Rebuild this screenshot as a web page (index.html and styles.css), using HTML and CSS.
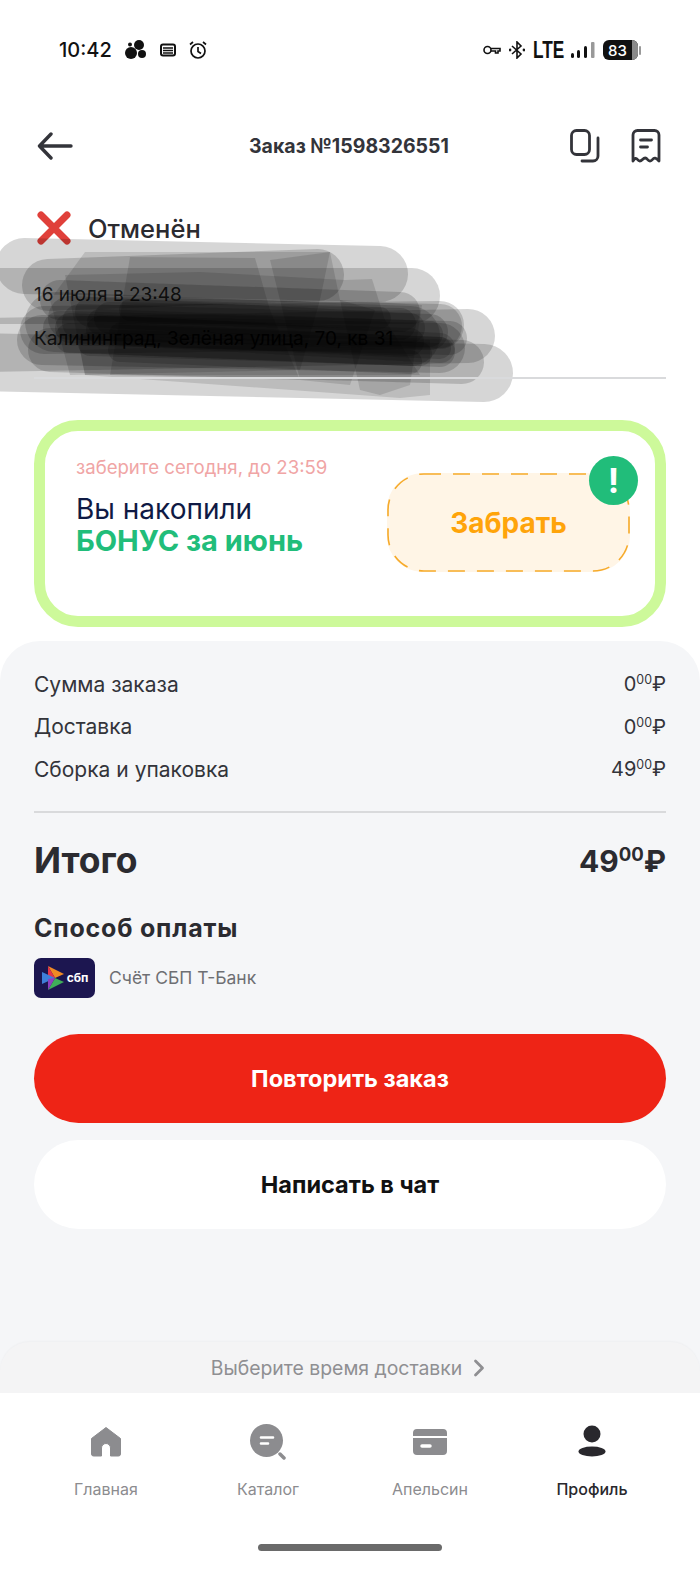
FILE: index.html
```html
<!DOCTYPE html>
<html lang="ru">
<head>
    <meta charset="UTF-8">
    <meta name="viewport" content="width=device-width, initial-scale=1.0">
    <title>Заказ №1598326551</title>
    <link rel="stylesheet" href="styles.css">
</head>
<body>
<div class="page">
    <!-- статус-бар -->
    <div class="statusbar">
        <div class="status-left">
            <span class="clock">10:42</span>
            <svg width="24" height="20" viewBox="0 0 24 20" fill="#111"><circle cx="15" cy="5" r="5"/><circle cx="7" cy="13" r="6"/><circle cx="18" cy="14" r="4"/><circle cx="6" cy="4.500" r="2"/></svg>
            <svg width="16" height="14" viewBox="0 0 16 14"><rect x="1" y="1.500" width="14" height="11" rx="2" fill="none" stroke="#111" stroke-width="2"/><path d="M3 5h10M3 7.500h10M3 10h10" stroke="#111" stroke-width="1.300"/></svg>
            <svg width="20" height="20" viewBox="0 0 20 20" fill="none" stroke="#111" stroke-width="1.700"><circle cx="10" cy="11" r="7"/><path d="M10 7v4.500l3 2M2 4.500 5 2M18 4.500 15 2"/></svg>
        </div>
        <div class="status-right">
            <svg width="18" height="10" viewBox="0 0 18 10" fill="none" stroke="#111" stroke-width="1.600"><circle cx="4.500" cy="5" r="3.500"/><path d="M8 3.500h9v2.500h-2v2h-2.500v-2H8"/></svg>
            <svg width="16" height="18" viewBox="0 0 16 18" fill="none" stroke="#111" stroke-width="1.600"><path d="M3 5l9 8-4 4V1l4 4-9 8"/><circle cx="1" cy="9" r=".6"/><circle cx="15" cy="9" r=".6"/></svg>
            <span class="lte">LTE</span>
            <svg width="24" height="18" viewBox="0 0 24 18"><rect x="0" y="12" width="3" height="5" rx="1.500" fill="#111"/><rect x="6" y="9" width="3" height="8" rx="1.500" fill="#111"/><rect x="13" y="5" width="3" height="12" rx="1.500" fill="#111"/><rect x="20" y="1" width="3.500" height="16" rx="1" fill="#999"/></svg>
            <span class="battery"><span class="battery-level">83</span><i class="battery-rest"></i></span>
            <i class="battery-tip"></i>
        </div>
    </div>

    <!-- шапка -->
    <div class="topbar">
        <div class="topbar-left">
            <svg width="36" height="28" viewBox="0 0 36 28" fill="none" stroke="#33343a" stroke-width="3.400" stroke-linecap="round" stroke-linejoin="round"><path d="M34 14H3M14 2 2.500 14 14 26"/></svg>
        </div>
        <div class="order-title">Заказ №1598326551</div>
        <div class="topbar-right">
            <svg width="30" height="34" viewBox="0 0 30 34" fill="none" stroke="#33343a" stroke-width="2.800" stroke-linecap="round" stroke-linejoin="round"><rect x="1.500" y="1.500" width="18" height="24" rx="5"/><path d="M28 9v18a5 5 0 0 1-5 5H12"/></svg>
            <svg width="30" height="34" viewBox="0 0 30 34" fill="none" stroke="#33343a" stroke-width="2.800" stroke-linecap="round" stroke-linejoin="round"><path d="M2 32V6a4.500 4.500 0 0 1 4.500-4.500h17A4.500 4.500 0 0 1 28 6v26c-3-3.500-5-3.500-6.500-1.500s-3.500 2-5 0-3-2-5 0-3.500 2-5 0S4 29 2 32z"/><path d="M9.500 11h11M9.500 18h7"/></svg>
        </div>
    </div>

    <!-- статус заказа -->
    <div class="order-info">
        <div class="order-status">
            <svg width="34" height="34" viewBox="0 0 34 34" fill="none" stroke="#e0403a" stroke-width="7" stroke-linecap="round"><path d="M4 4l26 26M30 4 4 30"/></svg>
            <span>Отменён</span>
        </div>
        <p class="order-date">16 июля в 23:48</p>
        <p class="order-address">Калининград, Зелёная улица, 70, кв 31</p>
        <svg class="scribble" width="530" height="180" viewBox="0 230 530 180" fill="none" stroke="#000" stroke-opacity=".16" stroke-linecap="round">
            <path d="M24 266 380 274" stroke-width="56"/>
            <path d="M-20 296 412 296" stroke-width="56"/>
            <path d="M-20 345 468 336" stroke-width="54"/>
            <path d="M-20 362 484 373" stroke-width="58"/>
            <path d="M48 285 318 275" stroke-width="52"/>
            <path d="M55 322 410 336" stroke-width="60"/>
            <path d="M42 340 440 348" stroke-width="50"/>
            <path d="M50 350 462 362" stroke-width="44"/>
            <path d="M60 300 400 312" stroke-width="40"/>
            <path d="M44 330 440 325" stroke-width="48"/>
            <path d="M70 318 440 326" stroke-width="44"/>
            <path d="M60 328 450 338" stroke-width="34"/>
            <path d="M80 322 430 332" stroke-width="36"/>
            <path d="M70 328 440 348" stroke-width="30"/>
            <path d="M110 318 400 324" stroke-width="32"/>
            <path d="M120 334 440 348" stroke-width="22"/>
            <path d="M90 312 410 328" stroke-width="30"/>
            <path d="M70 338 440 352" stroke-width="30"/>
            <path d="M100 322 430 334" stroke-width="26"/>
            <path d="M90 344 420 354" stroke-width="24"/>
            <path d="M130 310 380 318" stroke-width="22"/>
            <path d="M100 330 410 342" stroke-width="28"/>
            <path d="M120 350 410 362" stroke-width="24"/>
            <g fill="#000" fill-opacity=".12" stroke="none">
                <path d="M50 300 85 252 330 252 320 300 300 370 70 375z"/>
                <path d="M130 257 255 258 270 310 300 380 110 375z"/>
                <path d="M65 275 200 272 345 280 372 279 385 320 420 375 85 375z"/>
                <path d="M270 260 330 252 340 300 375 310 350 385 300 380z"/>
                <path d="M340 300 422 305 410 385 380 395 360 390z"/>
                <path d="M85 375 400 398 430 395 430 340 80 350z"/>
            </g>
        </svg>
        <div class="divider"></div>
    </div>

    <!-- бонус -->
    <div class="promo">
        <div class="promo-text">
            <div class="promo-deadline">заберите сегодня, до 23:59</div>
            <div class="promo-title">Вы накопили<br><b>БОНУС за июнь</b></div>
        </div>
        <div class="promo-btn">
            <svg class="promo-dash" width="243" height="99" viewBox="0 0 243 99" fill="none"><rect x="1" y="1" width="241" height="97" rx="36" stroke="#f6aa2a" stroke-width="1.600" stroke-dasharray="17 12"/></svg>
            <span>Забрать</span>
            <i class="promo-badge">!</i>
        </div>
    </div>

    <!-- итоги -->
    <div class="sheet">
        <div class="sheet-body">
            <div class="row"><span>Сумма заказа</span><span class="price">0<sup>00</sup>₽</span></div>
            <div class="row"><span>Доставка</span><span class="price">0<sup>00</sup>₽</span></div>
            <div class="row"><span>Сборка и упаковка</span><span class="price">49<sup>00</sup>₽</span></div>
            <div class="divider sheet-divider"></div>
            <div class="total"><span>Итого</span><span class="total-price">49<sup>00</sup>₽</span></div>
            <h3 class="pay-title">Способ оплаты</h3>
            <div class="pay-method">
                <div class="sbp-logo">
                    <svg width="24" height="26" viewBox="0 0 24 26">
                        <path d="M7 1 23 9 14 13z" fill="#f08a24"/>
                        <path d="M7 1l7 12-7 4z" fill="#e5344a"/>
                        <path d="M1 7l13 6-13 6z" fill="#3f7fd8"/>
                        <path d="M14 13l9 4-16 8z" fill="#3fae5a"/>
                        <path d="M7 14l7-1-7 12z" fill="#8e3fc0"/>
                    </svg>
                    <span>сбп</span>
                </div>
                <span class="pay-name">Счёт СБП Т-Банк</span>
            </div>
            <button class="btn btn-repeat">Повторить заказ</button>
            <button class="btn btn-chat">Написать в чат</button>
        </div>
        <div class="delivery">
            <span>Выберите время доставки</span>
            <svg width="12" height="18" viewBox="0 0 12 18" fill="none" stroke="#8f8f92" stroke-width="2.800" stroke-linecap="round" stroke-linejoin="round"><path d="M2.500 2 9.500 9l-7 7"/></svg>
        </div>
    </div>

    <!-- нижнее меню -->
    <div class="tabbar">
        <div class="tabs">
            <div class="tab">
                <svg width="32" height="34" viewBox="0 0 32 34"><path d="M16 2.500 30.500 13.500V29a2 2 0 0 1-2 2h-8V23a4.500 4.500 0 0 0-9 0v8h-8a2 2 0 0 1-2-2V13.500z" fill="#8c8c8f" stroke="#8c8c8f" stroke-linejoin="round"/></svg>
                <span>Главная</span>
            </div>
            <div class="tab">
                <svg width="36" height="36" viewBox="0 0 36 36"><circle cx="16.500" cy="16.500" r="16.500" fill="#8c8c8f"/><path d="M11 13.500h12M11 19.500h7" stroke="#fff" stroke-width="2.600" stroke-linecap="round"/><path d="M30 30l4 4" stroke="#8c8c8f" stroke-width="3.500" stroke-linecap="round"/></svg>
                <span>Каталог</span>
            </div>
            <div class="tab">
                <svg width="36" height="34" viewBox="0 0 36 34"><path d="M5 4h26a4 4 0 0 1 4 4v3H1V8a4 4 0 0 1 4-4zM1 13h34v13a4 4 0 0 1-4 4H5a4 4 0 0 1-4-4z" fill="#8c8c8f"/><path d="M10 21h8" stroke="#fff" stroke-width="3.500" stroke-linecap="round"/></svg>
                <span>Апельсин</span>
            </div>
            <div class="tab tab-active">
                <svg width="30" height="34" viewBox="0 0 30 34" fill="#29282d"><circle cx="15" cy="9" r="8.500"/><ellipse cx="15" cy="26.500" rx="13.500" ry="5"/></svg>
                <span>Профиль</span>
            </div>
        </div>
        <div class="home-bar"></div>
    </div>
</div>
</body>
</html>
```

FILE: styles.css
```css
* {
    margin: 0;
    padding: 0;
    box-sizing: border-box;
}
body {
    background: #fff;
    font-family: 'Inter', 'Noto Sans', sans-serif;
    color: #2b2b30;
}
.page {
    width: 700px;
    height: 1571px;
    display: flex;
    flex-direction: column;
    overflow: hidden;
}

/* статус-бар */
.statusbar {
    height: 100px;
    padding: 0 59px;
    display: flex;
    justify-content: space-between;
    align-items: center;
    color: #111;
}
.status-left, .status-right {
    display: flex;
    align-items: center;
}
.status-left {
    gap: 12px;
}
.status-right {
    gap: 8px;
}
.clock {
    font-size: 20px;
    font-weight: 500;
}
.lte {
    display: block;
    width: 30px;
    font-family: 'Liberation Sans', sans-serif;
    font-size: 23px;
    font-weight: 700;
    transform: scaleX(.75);
    transform-origin: left center;
    white-space: nowrap;
}
.battery {
    width: 35px;
    height: 20px;
    background: #111;
    border-radius: 6px;
    overflow: hidden;
    color: #fff;
    font-size: 15px;
    font-weight: 500;
    display: flex;
    align-items: center;
}
.battery-level {
    width: 29px;
    text-align: center;
}
.battery-rest {
    flex: 1;
    height: 100%;
    background: #8a8a8a;
}
.battery-tip {
    width: 2px;
    height: 9px;
    margin-left: -7px;
    background: #999;
    border-radius: 1px;
}

/* шапка */
.topbar {
    height: 92px;
    padding: 0 39px 0 37px;
    display: grid;
    grid-template-columns: 1fr auto 1fr;
    align-items: center;
}
.topbar-left, .topbar-right {
    display: flex;
}
.topbar-right {
    justify-content: flex-end;
    gap: 31px;
}
.order-title {
    font-size: 19.500px;
    font-weight: 700;
    color: #33343a;
}

/* статус заказа */
.order-info {
    position: relative;
    padding: 0 34px;
    height: 186px;
}
.order-status {
    display: flex;
    align-items: center;
    gap: 17px;
    font-size: 25.500px;
    font-weight: 500;
    height: 34px;
    margin-left: 3px;
    margin-top: 19px;
}
.order-date, .order-address {
    font-size: 19px;
    color: #333;
}
.order-date {
    margin-top: 38px;
}
.order-address {
    margin-top: 21px;
}
.scribble {
    position: absolute;
    left: 0;
    top: 38px;
    pointer-events: none;
}
.divider {
    height: 2px;
    background: #d9dadc;
}
.order-info .divider {
    position: absolute;
    left: 34px;
    right: 34px;
    bottom: -1px;
}

/* бонус */
.promo {
    margin: 42px 34px 0;
    height: 207px;
    border: 11px solid #cdf99a;
    border-radius: 44px;
    padding: 25px 25px 0 31px;
    display: flex;
    justify-content: space-between;
    align-items: flex-start;
}
.promo-deadline {
    font-size: 18.600px;
    color: #f0a5a5;
}
.promo-title {
    margin-top: 16px;
    font-size: 28px;
    line-height: 31px;
    color: #0f1a44;
}
.promo-title b {
    font-size: 29px;
    color: #21bd7a;
}
.promo-btn {
    position: relative;
    width: 243px;
    height: 99px;
    margin-top: 17px;
    background: #fff5e6;
    border-radius: 36px;
    display: flex;
    align-items: center;
    justify-content: center;
    font-size: 28px;
    font-weight: 700;
    color: #ffa40a;
}
.promo-dash {
    position: absolute;
    left: 0;
    top: 0;
}
.promo-badge {
    position: absolute;
    right: -8px;
    top: -17px;
    width: 49px;
    height: 49px;
    border-radius: 50%;
    background: #21bd7a;
    color: #fff;
    font-size: 34px;
    font-style: normal;
    font-weight: 700;
    text-align: center;
    line-height: 49px;
}

/* итоги */
.sheet {
    flex: 1;
    margin-top: 14px;
    background: #f5f6f8;
    border-radius: 40px 40px 0 0;
    display: flex;
    flex-direction: column;
}
.sheet-body {
    flex: 1;
    padding: 22px 34px 0;
}
.row {
    display: flex;
    justify-content: space-between;
    align-items: center;
    height: 42.500px;
    font-size: 21px;
    color: #33343a;
}
.price {
    font-size: 20px;
}
sup {
    font-size: .62em;
    vertical-align: baseline;
    position: relative;
    top: -.55em;
}
.sheet-divider {
    margin-top: 20px;
}
.total {
    display: flex;
    justify-content: space-between;
    align-items: center;
    margin-top: 27px;
    height: 42px;
    font-size: 35.500px;
    font-weight: 700;
}
.total-price {
    font-size: 30px;
}
.pay-title {
    margin-top: 31px;
    font-size: 25px;
    letter-spacing: .8px;
    font-weight: 700;
}
.pay-method {
    margin-top: 15px;
    display: flex;
    align-items: center;
    gap: 14px;
}
.sbp-logo {
    width: 61px;
    height: 40px;
    background: #1c1650;
    border-radius: 7px;
    display: flex;
    align-items: center;
    justify-content: center;
    gap: 2px;
    color: #fff;
    font-size: 12px;
    font-weight: 700;
}
.pay-name {
    font-size: 17.500px;
    color: #6e6f73;
}
.btn {
    display: block;
    width: 100%;
    height: 89px;
    border: none;
    border-radius: 45px;
    font-family: inherit;
    font-size: 23.500px;
    font-weight: 700;
}
.btn-repeat {
    margin-top: 36px;
    background: #ee2416;
    color: #fff;
}
.btn-chat {
    margin-top: 17px;
    background: #fff;
    color: #111;
}
.delivery {
    height: 51px;
    padding-right: 4px;
    background: #f4f4f5;
    border-radius: 30px 30px 0 0;
    box-shadow: 0 -1px 2px rgba(0, 0, 0, 0.03);
    display: flex;
    align-items: center;
    justify-content: center;
    gap: 11px;
    font-size: 19.400px;
    color: #8f8f92;
}

/* нижнее меню */
.tabbar {
    height: 178px;
    background: #fff;
    position: relative;
}
.tabs {
    padding: 31px 27px 0 25px;
    display: grid;
    grid-template-columns: repeat(4, 162px);
}
.tab {
    display: flex;
    flex-direction: column;
    align-items: center;
    gap: 19px;
    font-size: 16px;
    color: #8c8c8f;
}
.tab svg {
    height: 36px;
}
.tab-active {
    color: #29282d;
    font-weight: 500;
}
.home-bar {
    position: absolute;
    left: 258px;
    bottom: 20px;
    width: 184px;
    height: 7px;
    border-radius: 4px;
    background: #6a6a6a;
}
```
